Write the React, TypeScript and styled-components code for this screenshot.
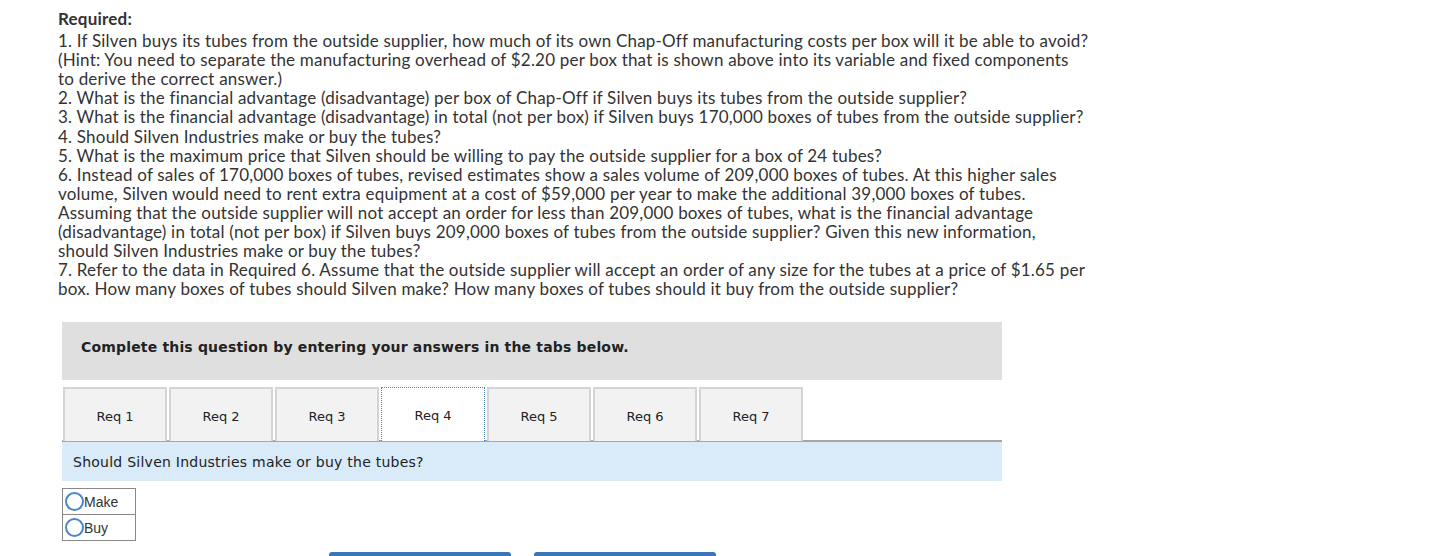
import React, { useState } from 'react';
import styled, { createGlobalStyle } from 'styled-components';

const GlobalStyle = createGlobalStyle`
  html, body {
    margin: 0;
    padding: 0;
    background: #ffffff;
    overflow: hidden;
  }
  body {
    font-family: Lato, 'Liberation Sans', Arial, sans-serif;
    color: #333333;
  }
`;

const Page = styled.div`
  padding: 9px 0 0 58px;
  width: 1100px;
`;

const Heading = styled.div`
  font-family: Lato, 'Liberation Sans', sans-serif;
  font-weight: 700;
  font-size: 17px;
  line-height: 19.1px;
  letter-spacing: 0.2px;
  color: #333;
  margin-bottom: 3px;
`;

const Question = styled.div`
  font-family: Lato, 'Liberation Sans', sans-serif;
  font-size: 17px;
  line-height: 19.1px;
  letter-spacing: 0.2px;
  color: #333;
  white-space: nowrap;
`;

const Widget = styled.div`
  margin: 24px 0 0 4px;
  width: 940px;
`;

const Banner = styled.div`
  background: #dfdfdf;
  height: 58px;
  box-sizing: border-box;
  display: flex;
  align-items: center;
  padding: 0 0 9px 19px;
  font-family: 'DejaVu Sans', Verdana, sans-serif;
  font-weight: 700;
  font-size: 14px;
  letter-spacing: 0.17px;
  color: #222;
`;

const TabStrip = styled.div`
  display: flex;
  gap: 2px;
  margin-top: 7px;
  padding-left: 1px;
  border-bottom: 2px solid #a6a6a6;
`;

const Tab = styled.button<{ $active?: boolean }>`
  width: 104px;
  height: 54px;
  margin-bottom: -1px;
  box-sizing: border-box;
  background: ${(p) => (p.$active ? '#ffffff' : '#f2f2f2')};
  border: ${(p) => (p.$active ? '1px dotted #4a7fc1' : '2px solid #d4d4d4')};
  border-bottom: none;
  font-family: 'DejaVu Sans', Verdana, sans-serif;
  font-size: 13px;
  color: #222;
  cursor: pointer;
  padding: 2px 0 0;
`;

const Prompt = styled.div`
  background: #d9ebf9;
  height: 39px;
  display: flex;
  align-items: center;
  padding: 1px 0 0 11px;
  box-sizing: border-box;
  font-family: 'DejaVu Sans', Verdana, sans-serif;
  font-size: 14px;
  letter-spacing: 0.25px;
  color: #222;
`;

const Choices = styled.div`
  margin-top: 7px;
  width: 74px;
  border: 1px solid #888;
  box-sizing: border-box;
`;

const Choice = styled.label`
  display: flex;
  align-items: center;
  height: 25px;
  padding-left: 2px;
  font-family: 'Liberation Sans', Arial, sans-serif;
  font-size: 14px;
  color: #333;
  cursor: pointer;

  & + & {
    border-top: 1px solid #888;
  }
`;

const Ring = styled.span<{ $on: boolean }>`
  width: 19px;
  height: 19px;
  box-sizing: border-box;
  border: 2px solid #4a86c8;
  border-radius: 50%;
  display: inline-flex;
  align-items: center;
  justify-content: center;

  &::after {
    content: '';
    width: 8px;
    height: 8px;
    border-radius: 50%;
    background: ${(p) => (p.$on ? '#4a86c8' : 'transparent')};
  }
`;

const NavRow = styled.div`
  display: flex;
  gap: 23px;
  margin: 11px 0 0 267px;
`;

const NavButton = styled.button`
  width: 182px;
  height: 40px;
  background: #3a76b8;
  border: none;
  border-radius: 3px;
`;

const lines = [
  '1. If Silven buys its tubes from the outside supplier, how much of its own Chap-Off manufacturing costs per box will it be able to avoid?',
  '(Hint: You need to separate the manufacturing overhead of $2.20 per box that is shown above into its variable and fixed components',
  'to derive the correct answer.)',
  '2. What is the financial advantage (disadvantage) per box of Chap-Off if Silven buys its tubes from the outside supplier?',
  '3. What is the financial advantage (disadvantage) in total (not per box) if Silven buys 170,000 boxes of tubes from the outside supplier?',
  '4. Should Silven Industries make or buy the tubes?',
  '5. What is the maximum price that Silven should be willing to pay the outside supplier for a box of 24 tubes?',
  '6. Instead of sales of 170,000 boxes of tubes, revised estimates show a sales volume of 209,000 boxes of tubes. At this higher sales',
  'volume, Silven would need to rent extra equipment at a cost of $59,000 per year to make the additional 39,000 boxes of tubes.',
  'Assuming that the outside supplier will not accept an order for less than 209,000 boxes of tubes, what is the financial advantage',
  '(disadvantage) in total (not per box) if Silven buys 209,000 boxes of tubes from the outside supplier? Given this new information,',
  'should Silven Industries make or buy the tubes?',
  '7. Refer to the data in Required 6. Assume that the outside supplier will accept an order of any size for the tubes at a price of $1.65 per',
  'box. How many boxes of tubes should Silven make? How many boxes of tubes should it buy from the outside supplier?',
];

const tabs = ['Req 1', 'Req 2', 'Req 3', 'Req 4', 'Req 5', 'Req 6', 'Req 7'];

export default function App() {
  const [active, setActive] = useState(3);
  const [pick, setPick] = useState<string | null>(null);

  return (
    <Page>
      <GlobalStyle />
      <Heading>Required:</Heading>
      {lines.map((l) => (
        <Question key={l}>{l}</Question>
      ))}
      <Widget>
        <Banner>Complete this question by entering your answers in the tabs below.</Banner>
        <TabStrip>
          {tabs.map((t, i) => (
            <Tab key={t} $active={i === active} onClick={() => setActive(i)}>
              {t}
            </Tab>
          ))}
        </TabStrip>
        <Prompt>Should Silven Industries make or buy the tubes?</Prompt>
        <Choices>
          {['Make', 'Buy'].map((c) => (
            <Choice key={c} onClick={() => setPick(c)}>
              <Ring $on={pick === c} />
              {c}
            </Choice>
          ))}
        </Choices>
        <NavRow>
          <NavButton />
          <NavButton />
        </NavRow>
      </Widget>
    </Page>
  );
}
